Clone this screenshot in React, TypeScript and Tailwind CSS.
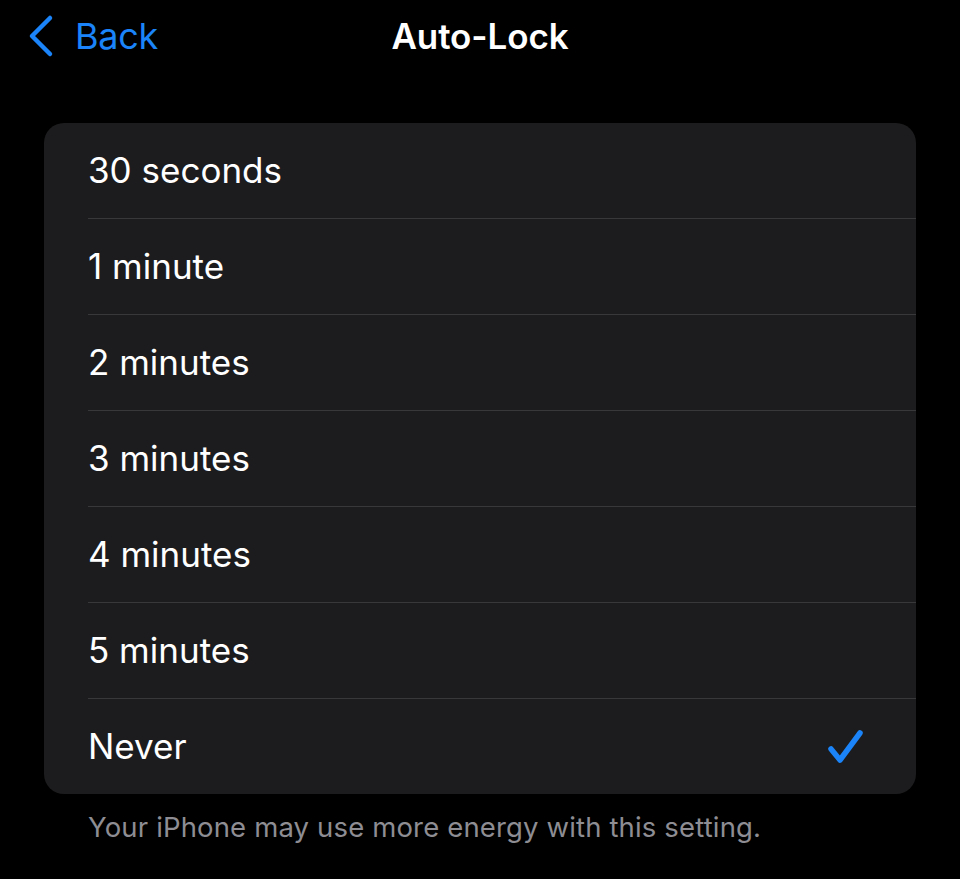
import { ChevronLeft } from 'lucide-react';

const options = ['30 seconds', '1 minute', '2 minutes', '3 minutes', '4 minutes', '5 minutes', 'Never'];

export default function App() {
  const selected = 'Never';

  return (
    <div className="min-h-[879px] w-[960px] bg-black text-white font-['Inter','Liberation_Sans',sans-serif]">
      {/* nav bar */}
      <div className="relative flex h-[72px] items-center justify-center">
        <button className="absolute left-[22px] top-[12px] flex items-center text-[#1a84f8]">
          <svg width="36" height="48" viewBox="0 0 36 48" fill="none">
            <path d="M28 6 L10 24 L28 42" stroke="currentColor" strokeWidth="4.5" strokeLinecap="round" strokeLinejoin="round" />
          </svg>
          <span className="ml-[17px] text-[36px] leading-none tracking-[-0.3px]">Back</span>
        </button>
        <h1 className="text-[35px] font-semibold leading-none tracking-[-0.1px]">Auto-Lock</h1>
      </div>

      <div className="px-[44px] pt-[51px]">
        <div className="overflow-hidden rounded-[20px] bg-[#1c1c1e]">
          {options.map((opt, i) => (
            <div key={opt} className="pl-[44px]">
              <div
                className={
                  i < options.length - 1
                    ? 'flex h-[96px] items-center justify-between border-b border-[#38383a] pr-[52px]'
                    : 'flex h-[95px] items-center justify-between pr-[52px]'
                }
              >
                <span className="text-[35px] leading-none tracking-[0px]">{opt}</span>
                {opt === selected && (
                  <svg width="37" height="35" viewBox="0 0 37 35" fill="none" className="text-[#1a84f8]">
                    <path d="M4 20 L13 31 L33 4" stroke="currentColor" strokeWidth="5.5" strokeLinecap="round" strokeLinejoin="round" />
                  </svg>
                )}
              </div>
            </div>
          ))}
        </div>
        <p className="mt-[20px] pl-[44px] text-[27.5px] leading-none tracking-[0.15px] text-[#8d8d93]">
          Your iPhone may use more energy with this setting.
        </p>
      </div>
    </div>
  );
}
